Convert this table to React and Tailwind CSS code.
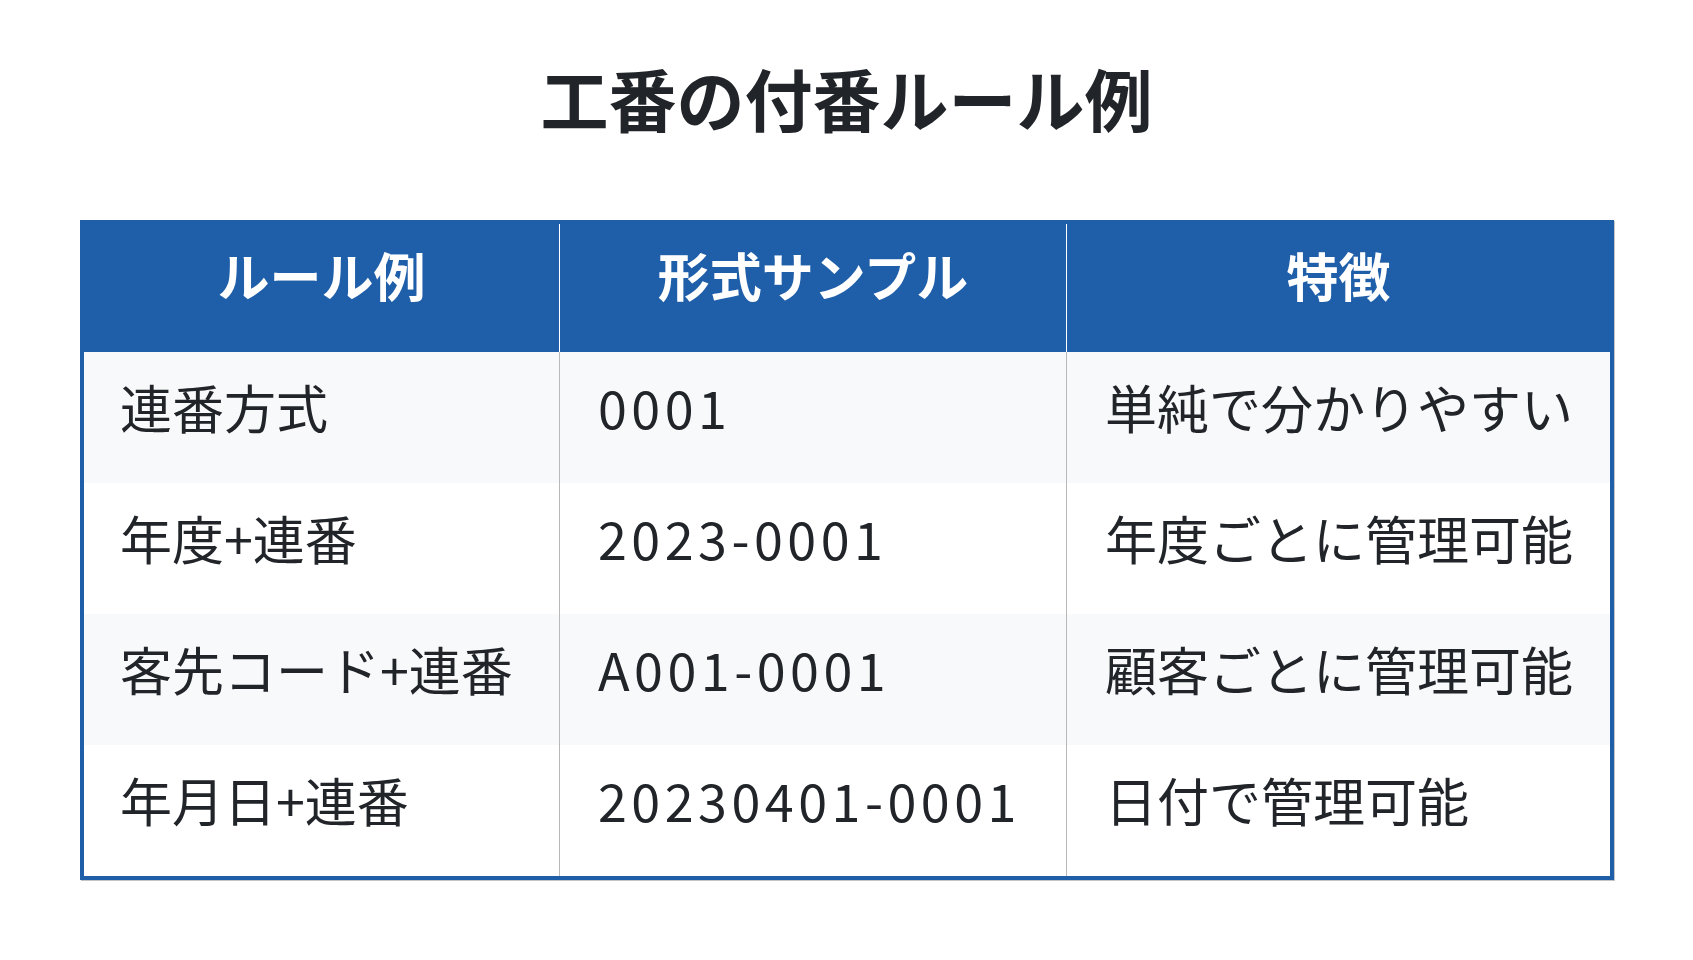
import React from 'react';

const rows = [
  { rule: '連番方式', sample: '0001', note: '単純で分かりやすい' },
  { rule: '年度+連番', sample: '2023-0001', note: '年度ごとに管理可能' },
  { rule: '客先コード+連番', sample: 'A001-0001', note: '顧客ごとに管理可能' },
  { rule: '年月日+連番', sample: '20230401-0001', note: '日付で管理可能' },
];

export default function App() {
  return (
    <div
      className="min-h-screen bg-white text-[#212529] px-[80px] pt-[57px]"
      style={{ fontFamily: '"Noto Sans CJK JP", "Noto Sans", sans-serif' }}
    >
      <h1 className="text-center text-[68px] font-bold leading-[1.2]">工番の付番ルール例</h1>

      <table className="mt-[81px] w-[1534px] table-fixed border-separate border-spacing-0 border-4 border-[#1f5ea8] shadow-[1px_1px_0_#c4c4c4]">
        <colgroup>
          <col className="w-[475px]" />
          <col className="w-[507px]" />
          <col className="w-[544px]" />
        </colgroup>
        <thead>
          <tr className="bg-[#1f5ea8] text-white">
            <th className="h-[128px] pt-0 pb-[25px] px-0 text-center text-[52px] font-bold leading-normal">ルール例</th>
            <th className="h-[128px] pt-0 pb-[25px] px-0 text-center text-[52px] font-bold leading-normal border-l border-white">形式サンプル</th>
            <th className="h-[128px] pt-0 pb-[25px] px-0 text-center text-[52px] font-bold leading-normal border-l border-white">特徴</th>
          </tr>
        </thead>
        <tbody>
          {rows.map((row, i) => (
            <tr key={row.rule} className={i % 2 === 0 ? 'bg-[#f8f9fa]' : 'bg-white'}>
              <td className="h-[131px] pt-0 pb-[20px] pl-[36px] pr-0 text-[52px] leading-normal whitespace-nowrap">{row.rule}</td>
              <td className="h-[131px] pt-0 pb-[20px] pl-[38px] pr-0 text-[52px] leading-normal whitespace-nowrap tracking-[4.5px] border-l border-[#b8b8b8]">{row.sample}</td>
              <td className="h-[131px] pt-0 pb-[20px] pl-[38px] pr-0 text-[52px] leading-normal whitespace-nowrap border-l border-[#b8b8b8]">{row.note}</td>
            </tr>
          ))}
        </tbody>
      </table>
    </div>
  );
}
